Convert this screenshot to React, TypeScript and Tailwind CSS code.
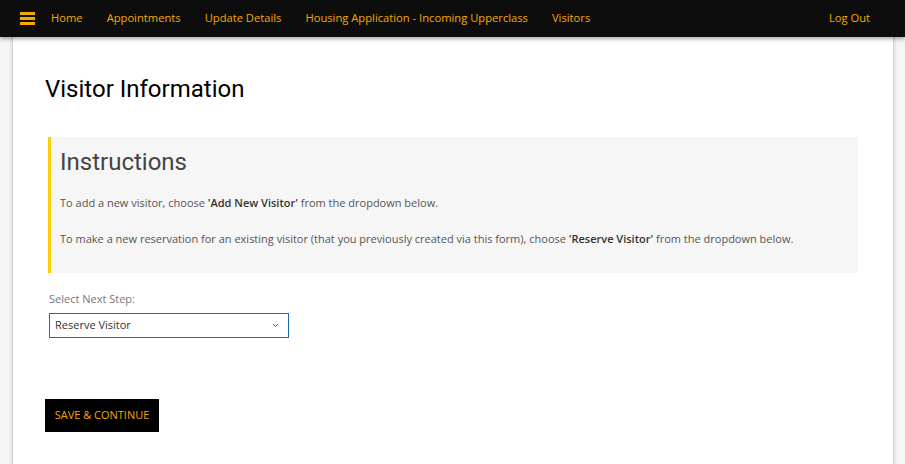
import { FC } from 'react';

const navItems = ['Home', 'Appointments', 'Update Details', 'Housing Application - Incoming Upperclass', 'Visitors'];

const App: FC = () => {
  return (
    <div className="min-h-screen bg-[#f5f5f5] font-['Open_Sans',sans-serif] overflow-hidden">
      {/* Top nav */}
      <nav className="relative z-10 h-[37px] bg-[#0d0d0d] flex items-center pl-[20px] pr-[35px] shadow-[0_2px_4px_rgba(0,0,0,0.35)]">
        <div className="flex flex-col gap-[2px] mr-[16px]">
          <span className="block w-[15px] h-[3px] bg-[#f6a800]" />
          <span className="block w-[15px] h-[3px] bg-[#f6a800]" />
          <span className="block w-[15px] h-[3px] bg-[#f6a800]" />
        </div>
        <ul className="flex items-center gap-[24px] text-[11.2px] text-[#f6a800] -mt-px">
          {navItems.map((item) => (
            <li key={item}>{item}</li>
          ))}
        </ul>
        <span className="ml-auto -mt-px text-[11.2px] text-[#f6a800]">Log Out</span>
      </nav>

      {/* Card */}
      <main className="-mt-[37px] ml-[13px] mr-[12px] min-h-[480px] bg-white shadow-[0_0_4px_rgba(0,0,0,0.3)] pt-[37px] px-[32px]">
        <h1 className="pt-[37px] font-['Roboto',sans-serif] text-[24px] leading-[30px] text-black">Visitor Information</h1>

        {/* Instructions */}
        <section className="mt-[33px] mx-[3px] bg-[#f6f6f6] border-l-[3px] border-[#fcd000] pl-[9px] pr-4 pt-[10px] pb-[26px] text-[11px] text-[#555]">
          <h2 className="font-['Roboto',sans-serif] text-[24px] leading-[30px] text-[#444] mb-[18px]">Instructions</h2>
          <p className="leading-[16px]">
            To add a new visitor, choose <b className="font-semibold text-[#333]">'Add New Visitor'</b> from the dropdown below.
          </p>
          <p className="leading-[16px] mt-[20px]">
            To make a new reservation for an existing visitor (that you previously created via this form), choose{' '}
            <b className="font-semibold text-[#333]">'Reserve Visitor'</b> from the dropdown below.
          </p>
        </section>

        {/* Select */}
        <div className="mt-[18px] ml-[4px]">
          <label className="block text-[11px] leading-[16px] text-[#777]">Select Next Step:</label>
          <div className="mt-[6px] w-[240px] h-[25px] border border-[#1d6cb3] flex items-center justify-between pl-[5px] pr-[9px] text-[11px] text-[#333]">
            <span>Reserve Visitor</span>
            <svg width="7" height="5" viewBox="0 0 7 5" fill="none">
              <path d="M1 1l2.5 2.5L6 1" stroke="#555" strokeWidth="1" />
            </svg>
          </div>
        </div>

        <button className="mt-[61px] h-[33px] w-[114px] bg-black text-[#f6a800] text-[11px] uppercase">
          Save &amp; Continue
        </button>
      </main>
    </div>
  );
};

export default App;
